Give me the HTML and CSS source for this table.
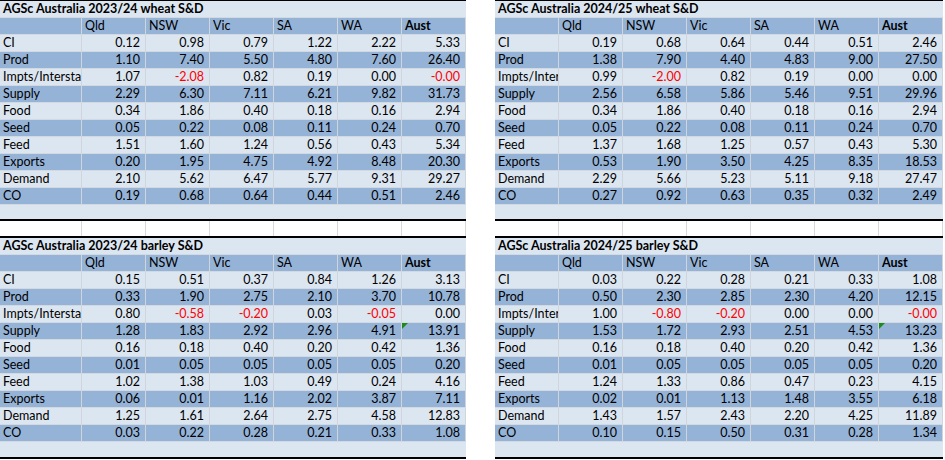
FILE: index.html
```html
<!DOCTYPE html>
<html lang="en">
<head>
<meta charset="utf-8">
<title>AGSc Australia S&amp;D</title>
<link rel="stylesheet" href="styles.css">
</head>
<body>
<div class="sheet">
  <div class="panel panel-left">
    <section class="tbl tbl-top">
      <div class="title">AGSc Australia 2023/24 wheat S&amp;D</div>
      <div class="row dark head"><div class="c"></div><div class="c">Qld</div><div class="c">NSW</div><div class="c">Vic</div><div class="c">SA</div><div class="c">WA</div><div class="c b">Aust</div></div>
      <div class="row light"><div class="c">CI</div><div class="c n">0.12</div><div class="c n">0.98</div><div class="c n">0.79</div><div class="c n">1.22</div><div class="c n">2.22</div><div class="c n">5.33</div></div>
      <div class="row dark"><div class="c">Prod</div><div class="c n">1.10</div><div class="c n">7.40</div><div class="c n">5.50</div><div class="c n">4.80</div><div class="c n">7.60</div><div class="c n">26.40</div></div>
      <div class="row light"><div class="c">Impts/Intersta</div><div class="c n">1.07</div><div class="c n neg">-2.08</div><div class="c n">0.82</div><div class="c n">0.19</div><div class="c n">0.00</div><div class="c n neg">-0.00</div></div>
      <div class="row dark"><div class="c">Supply</div><div class="c n">2.29</div><div class="c n">6.30</div><div class="c n">7.11</div><div class="c n">6.21</div><div class="c n">9.82</div><div class="c n">31.73</div></div>
      <div class="row light"><div class="c">Food</div><div class="c n">0.34</div><div class="c n">1.86</div><div class="c n">0.40</div><div class="c n">0.18</div><div class="c n">0.16</div><div class="c n">2.94</div></div>
      <div class="row dark"><div class="c">Seed</div><div class="c n">0.05</div><div class="c n">0.22</div><div class="c n">0.08</div><div class="c n">0.11</div><div class="c n">0.24</div><div class="c n">0.70</div></div>
      <div class="row light"><div class="c">Feed</div><div class="c n">1.51</div><div class="c n">1.60</div><div class="c n">1.24</div><div class="c n">0.56</div><div class="c n">0.43</div><div class="c n">5.34</div></div>
      <div class="row dark"><div class="c">Exports</div><div class="c n">0.20</div><div class="c n">1.95</div><div class="c n">4.75</div><div class="c n">4.92</div><div class="c n">8.48</div><div class="c n">20.30</div></div>
      <div class="row light"><div class="c">Demand</div><div class="c n">2.10</div><div class="c n">5.62</div><div class="c n">6.47</div><div class="c n">5.77</div><div class="c n">9.31</div><div class="c n">29.27</div></div>
      <div class="row dark"><div class="c">CO</div><div class="c n">0.19</div><div class="c n">0.68</div><div class="c n">0.64</div><div class="c n">0.44</div><div class="c n">0.51</div><div class="c n">2.46</div></div>
      <div class="empty"></div>
    </section>
    <div class="row spacer"><div class="c"></div><div class="c"></div><div class="c"></div><div class="c"></div><div class="c"></div><div class="c"></div><div class="c"></div></div>
    <section class="tbl tbl-bottom">
      <div class="title">AGSc Australia 2023/24 barley S&amp;D</div>
      <div class="row dark head"><div class="c"></div><div class="c">Qld</div><div class="c">NSW</div><div class="c">Vic</div><div class="c">SA</div><div class="c">WA</div><div class="c b">Aust</div></div>
      <div class="row light"><div class="c">CI</div><div class="c n">0.15</div><div class="c n">0.51</div><div class="c n">0.37</div><div class="c n">0.84</div><div class="c n">1.26</div><div class="c n">3.13</div></div>
      <div class="row dark"><div class="c">Prod</div><div class="c n">0.33</div><div class="c n">1.90</div><div class="c n">2.75</div><div class="c n">2.10</div><div class="c n">3.70</div><div class="c n">10.78</div></div>
      <div class="row light"><div class="c">Impts/Intersta</div><div class="c n">0.80</div><div class="c n neg">-0.58</div><div class="c n neg">-0.20</div><div class="c n">0.03</div><div class="c n neg">-0.05</div><div class="c n">0.00</div></div>
      <div class="row dark"><div class="c">Supply</div><div class="c n">1.28</div><div class="c n">1.83</div><div class="c n">2.92</div><div class="c n">2.96</div><div class="c n">4.91</div><div class="c n flag">13.91</div></div>
      <div class="row light"><div class="c">Food</div><div class="c n">0.16</div><div class="c n">0.18</div><div class="c n">0.40</div><div class="c n">0.20</div><div class="c n">0.42</div><div class="c n">1.36</div></div>
      <div class="row dark"><div class="c">Seed</div><div class="c n">0.01</div><div class="c n">0.05</div><div class="c n">0.05</div><div class="c n">0.05</div><div class="c n">0.05</div><div class="c n">0.20</div></div>
      <div class="row light"><div class="c">Feed</div><div class="c n">1.02</div><div class="c n">1.38</div><div class="c n">1.03</div><div class="c n">0.49</div><div class="c n">0.24</div><div class="c n">4.16</div></div>
      <div class="row dark"><div class="c">Exports</div><div class="c n">0.06</div><div class="c n">0.01</div><div class="c n">1.16</div><div class="c n">2.02</div><div class="c n">3.87</div><div class="c n">7.11</div></div>
      <div class="row light"><div class="c">Demand</div><div class="c n">1.25</div><div class="c n">1.61</div><div class="c n">2.64</div><div class="c n">2.75</div><div class="c n">4.58</div><div class="c n">12.83</div></div>
      <div class="row dark"><div class="c">CO</div><div class="c n">0.03</div><div class="c n">0.22</div><div class="c n">0.28</div><div class="c n">0.21</div><div class="c n">0.33</div><div class="c n">1.08</div></div>
      <div class="empty"></div>
    </section>
  </div>

  <div class="panel panel-right">
    <section class="tbl tbl-top">
      <div class="title">AGSc Australia 2024/25 wheat S&amp;D</div>
      <div class="row dark head"><div class="c"></div><div class="c">Qld</div><div class="c">NSW</div><div class="c">Vic</div><div class="c">SA</div><div class="c">WA</div><div class="c b">Aust</div></div>
      <div class="row light"><div class="c">CI</div><div class="c n">0.19</div><div class="c n">0.68</div><div class="c n">0.64</div><div class="c n">0.44</div><div class="c n">0.51</div><div class="c n">2.46</div></div>
      <div class="row dark"><div class="c">Prod</div><div class="c n">1.38</div><div class="c n">7.90</div><div class="c n">4.40</div><div class="c n">4.83</div><div class="c n">9.00</div><div class="c n">27.50</div></div>
      <div class="row light"><div class="c">Impts/Inter</div><div class="c n">0.99</div><div class="c n neg">-2.00</div><div class="c n">0.82</div><div class="c n">0.19</div><div class="c n">0.00</div><div class="c n">0.00</div></div>
      <div class="row dark"><div class="c">Supply</div><div class="c n">2.56</div><div class="c n">6.58</div><div class="c n">5.86</div><div class="c n">5.46</div><div class="c n">9.51</div><div class="c n">29.96</div></div>
      <div class="row light"><div class="c">Food</div><div class="c n">0.34</div><div class="c n">1.86</div><div class="c n">0.40</div><div class="c n">0.18</div><div class="c n">0.16</div><div class="c n">2.94</div></div>
      <div class="row dark"><div class="c">Seed</div><div class="c n">0.05</div><div class="c n">0.22</div><div class="c n">0.08</div><div class="c n">0.11</div><div class="c n">0.24</div><div class="c n">0.70</div></div>
      <div class="row light"><div class="c">Feed</div><div class="c n">1.37</div><div class="c n">1.68</div><div class="c n">1.25</div><div class="c n">0.57</div><div class="c n">0.43</div><div class="c n">5.30</div></div>
      <div class="row dark"><div class="c">Exports</div><div class="c n">0.53</div><div class="c n">1.90</div><div class="c n">3.50</div><div class="c n">4.25</div><div class="c n">8.35</div><div class="c n">18.53</div></div>
      <div class="row light"><div class="c">Demand</div><div class="c n">2.29</div><div class="c n">5.66</div><div class="c n">5.23</div><div class="c n">5.11</div><div class="c n">9.18</div><div class="c n">27.47</div></div>
      <div class="row dark"><div class="c">CO</div><div class="c n">0.27</div><div class="c n">0.92</div><div class="c n">0.63</div><div class="c n">0.35</div><div class="c n">0.32</div><div class="c n">2.49</div></div>
      <div class="empty"></div>
    </section>
    <div class="row spacer"><div class="c"></div><div class="c"></div><div class="c"></div><div class="c"></div><div class="c"></div><div class="c"></div><div class="c"></div></div>
    <section class="tbl tbl-bottom">
      <div class="title">AGSc Australia 2024/25 barley S&amp;D</div>
      <div class="row dark head"><div class="c"></div><div class="c">Qld</div><div class="c">NSW</div><div class="c">Vic</div><div class="c">SA</div><div class="c">WA</div><div class="c b">Aust</div></div>
      <div class="row light"><div class="c">CI</div><div class="c n">0.03</div><div class="c n">0.22</div><div class="c n">0.28</div><div class="c n">0.21</div><div class="c n">0.33</div><div class="c n">1.08</div></div>
      <div class="row dark"><div class="c">Prod</div><div class="c n">0.50</div><div class="c n">2.30</div><div class="c n">2.85</div><div class="c n">2.30</div><div class="c n">4.20</div><div class="c n">12.15</div></div>
      <div class="row light"><div class="c">Impts/Inter</div><div class="c n">1.00</div><div class="c n neg">-0.80</div><div class="c n neg">-0.20</div><div class="c n">0.00</div><div class="c n">0.00</div><div class="c n neg">-0.00</div></div>
      <div class="row dark"><div class="c">Supply</div><div class="c n">1.53</div><div class="c n">1.72</div><div class="c n">2.93</div><div class="c n">2.51</div><div class="c n">4.53</div><div class="c n flag">13.23</div></div>
      <div class="row light"><div class="c">Food</div><div class="c n">0.16</div><div class="c n">0.18</div><div class="c n">0.40</div><div class="c n">0.20</div><div class="c n">0.42</div><div class="c n">1.36</div></div>
      <div class="row dark"><div class="c">Seed</div><div class="c n">0.01</div><div class="c n">0.05</div><div class="c n">0.05</div><div class="c n">0.05</div><div class="c n">0.05</div><div class="c n">0.20</div></div>
      <div class="row light"><div class="c">Feed</div><div class="c n">1.24</div><div class="c n">1.33</div><div class="c n">0.86</div><div class="c n">0.47</div><div class="c n">0.23</div><div class="c n">4.15</div></div>
      <div class="row dark"><div class="c">Exports</div><div class="c n">0.02</div><div class="c n">0.01</div><div class="c n">1.13</div><div class="c n">1.48</div><div class="c n">3.55</div><div class="c n">6.18</div></div>
      <div class="row light"><div class="c">Demand</div><div class="c n">1.43</div><div class="c n">1.57</div><div class="c n">2.43</div><div class="c n">2.20</div><div class="c n">4.25</div><div class="c n">11.89</div></div>
      <div class="row dark"><div class="c">CO</div><div class="c n">0.10</div><div class="c n">0.15</div><div class="c n">0.50</div><div class="c n">0.31</div><div class="c n">0.28</div><div class="c n">1.34</div></div>
      <div class="empty"></div>
    </section>
  </div>
</div>
</body>
</html>
```
FILE: styles.css
```css
html, body {
  margin: 0;
  padding: 0;
  background: #ffffff;
}

body {
  font-family: "Lato", "Liberation Sans", sans-serif;
  font-size: 12.5px;
  color: #000000;
}

.sheet {
  display: flex;
  gap: 29px;
  align-items: flex-start;
}

.panel {
  display: flex;
  flex-direction: column;
}

.panel-left { width: 466px; }
.panel-right { width: 448px; }

.panel-left .row { grid-template-columns: 82px repeat(6, 64px); }
.panel-right .row { grid-template-columns: 64px repeat(6, 64px); }

.tbl {
  display: flex;
  flex-direction: column;
  border-bottom: 2px solid #000000;
}

.tbl-top { border-top: 1px solid #000000; }
.tbl-bottom { border-top: 2px solid #000000; }

.title {
  height: 17px;
  box-sizing: border-box;
  padding: 0 3px;
  line-height: 16px;
  font-weight: 700;
  background: #dce6f1;
  border-bottom: 1px solid #d3d9e0;
  white-space: nowrap;
  overflow: hidden;
}

.row {
  display: grid;
  height: 17px;
}

.c {
  box-sizing: border-box;
  height: 17px;
  padding: 0 3px;
  line-height: 16px;
  border-right: 1px solid #cfd5dc;
  border-bottom: 1px solid #d3d9e0;
  white-space: nowrap;
  overflow: hidden;
}

.light { background: #dce6f1; }
.dark { background: #95b3d7; }

.n {
  text-align: right;
  padding-right: 5px;
}

.b { font-weight: 700; }

.neg { color: #ff0000; }

.flag { position: relative; }

.flag::before {
  content: "";
  position: absolute;
  left: 0;
  top: 0;
  border-top: 6px solid #1e8a1e;
  border-right: 6px solid transparent;
}

.empty {
  height: 14px;
  background: #dce6f1;
}

.tbl-bottom .empty { height: 15px; }

.spacer {
  height: 15px;
  background: #ffffff;
}

.spacer .c {
  height: 15px;
  border-bottom: none;
  border-right-color: #d9d9d9;
}
```
